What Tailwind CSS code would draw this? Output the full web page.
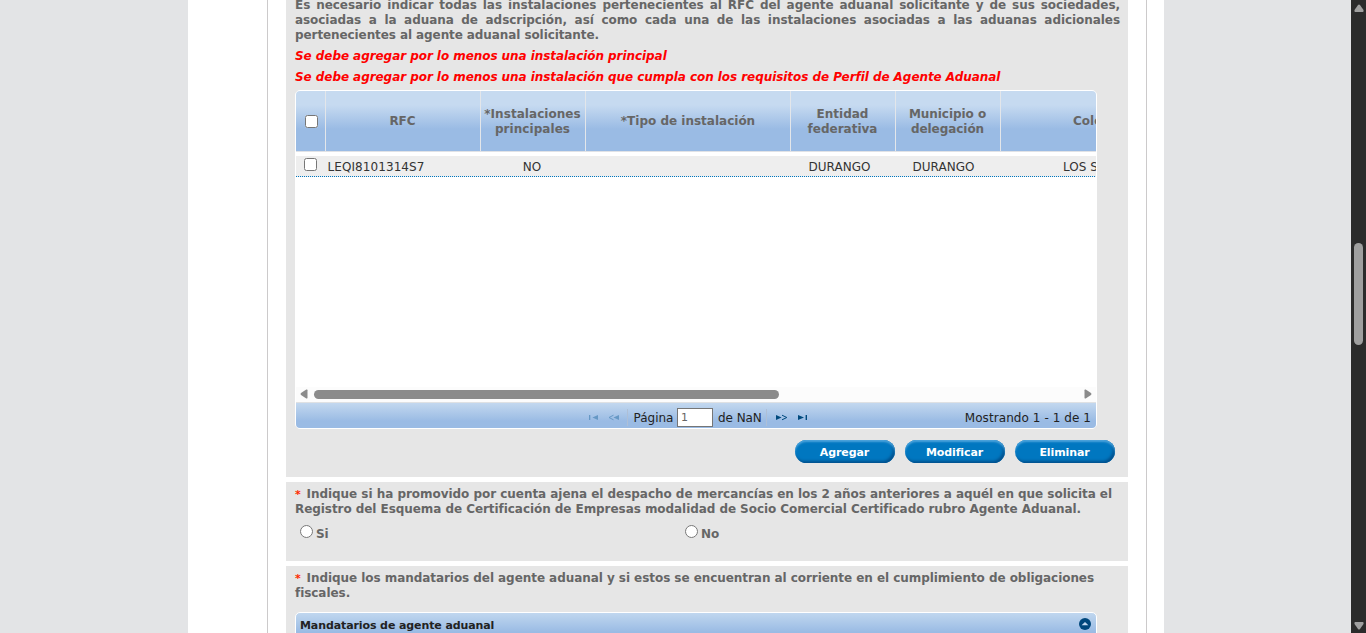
<!DOCTYPE html>
<html lang="es">
<head>
<meta charset="utf-8">
<title>Agente aduanal</title>
<script src="https://cdn.jsdelivr.net/npm/@tailwindcss/browser@4"></script>
</head>
<body class="h-[633px] overflow-hidden bg-[#e3e4e6] font-['DejaVu_Sans',sans-serif] text-[12px] leading-[15px]">
<div class="flex h-[633px] overflow-hidden">
  <div class="w-[188px] shrink-0"></div>
  <main class="w-[976px] shrink-0 bg-white pl-[79px] pr-[17px]">
    <div class="flex h-[633px] flex-col gap-[5px] overflow-hidden border-x border-[#cccacb] px-[18px] text-[#666]">

      <section class="h-[477px] shrink-0 overflow-hidden bg-[#e6e6e6] pl-[9px] pr-[8px]">
        <div class="-mt-[2px] font-bold tracking-[-0.06px]">
          <p class="w-[825px] text-justify [text-align-last:justify]">Es necesario indicar todas las instalaciones pertenecientes al RFC del agente aduanal solicitante y de sus sociedades,</p>
          <p class="w-[825px] text-justify [text-align-last:justify]">asociadas a la aduana de adscripción, así como cada una de las instalaciones asociadas a las aduanas adicionales</p>
          <p class="tracking-[-0.09px]">pertenecientes al agente aduanal solicitante.</p>
          <p class="mt-[6px] italic text-[#ff0000]">Se debe agregar por lo menos una instalación principal</p>
          <p class="mt-[6px] italic text-[#ff0000]">Se debe agregar por lo menos una instalación que cumpla con los requisitos de Perfil de Agente Aduanal</p>
        </div>

        <div class="mt-[5px] h-[339px] w-[802px] overflow-hidden rounded-[5px] border border-white bg-white">
          <div class="flex h-[61px] border-b border-[#e0e2e6] bg-[linear-gradient(to_bottom,#c6daf0_0,#c6daf0_14px,#9abbe4_38px,#9abbe4_100%)] text-center font-bold">
            <div class="flex w-[30px] shrink-0 items-center justify-center border-r border-[#e3e6ea]"><input type="checkbox" class="ml-[2px] size-[13px]"></div>
            <div class="flex w-[155px] shrink-0 items-center justify-center border-r border-[#e3e6ea] pr-px">RFC</div>
            <div class="flex w-[105px] shrink-0 items-center overflow-hidden border-r border-[#e3e6ea] px-[3px] pt-px"><div class="w-[97px] overflow-hidden whitespace-nowrap"><div class="w-[97px] tracking-[0.05px]">*Instalaciones<br>principales</div></div></div>
            <div class="flex w-[205px] shrink-0 items-center justify-center border-r border-[#e3e6ea]">*Tipo de instalación</div>
            <div class="flex w-[105px] shrink-0 items-center justify-center border-r border-[#e3e6ea] pt-px pr-px">Entidad<br>federativa</div>
            <div class="flex w-[105px] shrink-0 items-center justify-center border-r border-[#e3e6ea] pt-px pr-px tracking-[-0.05px]">Municipio o<br>delegación</div>
            <div class="flex w-[200px] shrink-0 items-center pl-[72px]">Colonia</div>
          </div>
          <div class="mt-[4px] flex h-[20px] bg-[#eee] pt-[4px] text-[#333]">
            <div class="w-[29px] shrink-0 pl-[8px]"><input type="checkbox" class="-mt-[2px] block size-[13px]"></div>
            <div class="w-[155px] shrink-0 pl-[2.5px] tracking-[0.08px]">LEQI8101314S7</div>
            <div class="w-[104px] shrink-0 text-center">NO</div>
            <div class="w-[204px] shrink-0"></div>
            <div class="w-[104px] shrink-0 pr-px text-center">DURANGO</div>
            <div class="w-[104px] shrink-0 pr-px text-center">DURANGO</div>
            <div class="w-[204px] shrink-0 pl-[67px]">LOS SAUCES</div>
          </div>
          <div class="h-px bg-[repeating-linear-gradient(to_right,#0077c0_0,#0077c0_1px,#eee_1px,#eee_2px)]"></div>
          <div class="h-[210px]"></div>
          <div class="flex h-[15px] items-center bg-[#fcfcfc] pl-[4px] pr-[4px]">
            <svg class="-mt-px h-[10px] w-[8px]" viewBox="0 0 8 10"><path d="M6.3.6Q7.5 0 7.5 1.2v7.6Q7.5 10 6.3 9.4L1 6Q0 5 1 4Z" fill="#8b8b8b"/></svg>
            <div class="ml-[6px] h-[9px] w-[465px] rounded-full bg-[#8b8b8b]"></div>
            <svg class="-mt-px ml-auto h-[10px] w-[8px]" viewBox="0 0 8 10"><path d="M1.7.6Q.5 0 .5 1.2v7.6Q.5 10 1.7 9.4L7 6Q8 5 7 4Z" fill="#8b8b8b"/></svg>
          </div>
          <div class="flex h-[26px] items-center border-t border-[#dfe1e3] bg-[linear-gradient(to_bottom,#c3d8ef_0,#9abbe4_18px,#9abbe4_100%)] pt-[3px] pr-[5px] text-[#222]">
            <svg class="ml-[293px] h-[7px] w-[32px]" viewBox="0 0 32 7" fill="#6698c5"><path d="M0 1h1.3v5H0ZM9 1v5L3.4 3.5ZM30 1v5L24.4 3.5Z"/><path d="M24.5 1.2 20 3.5 24.5 5.8" fill="none" stroke="#6698c5"/></svg>
            <div class="ml-[6px] h-[17px] w-px bg-[#aebfd6]"></div>
            <span class="ml-[5.5px] pt-[2px]">Página</span>
            <input value="1" class="ml-[3.5px] h-[19px] w-[36px] shrink-0 border border-[#767676] bg-white pt-px pl-[3px] text-[11px] text-[#666]">
            <span class="ml-[5px] pt-[2px] tracking-[-0.05px]">de NaN</span>
            <div class="ml-[4px] h-[17px] w-px bg-[#aebfd6]"></div>
            <svg class="ml-[9px] h-[7px] w-[32px]" viewBox="0 0 32 7" fill="#004a7d"><path d="M0 1v5L5.6 3.5ZM22 1v5L28 3.5ZM29.6 1H31v5h-1.4Z"/><path d="M6 1.2 10.8 3.5 6 5.8" fill="none" stroke="#004a7d"/></svg>
            <span class="ml-auto pt-[2px] tracking-[0.07px]">Mostrando 1 - 1 de 1</span>
          </div>
        </div>

        <div class="mt-[11px] mr-[5px] flex justify-end gap-[10px] text-[11px] font-bold tracking-[-0.1px] text-white">
          <button class="h-[23px] w-[100px] rounded-full bg-[#0077c0] pt-[1px] pr-px shadow-[inset_0_2px_2px_#4ba3dc,inset_-2px_-2px_3px_#00508c]">Agregar</button>
          <button class="h-[23px] w-[100px] rounded-full bg-[#0077c0] pt-[1px] pr-px shadow-[inset_0_2px_2px_#4ba3dc,inset_-2px_-2px_3px_#00508c]">Modificar</button>
          <button class="h-[23px] w-[100px] rounded-full bg-[#0077c0] pt-[1px] pr-px shadow-[inset_0_2px_2px_#4ba3dc,inset_-2px_-2px_3px_#00508c]">Eliminar</button>
        </div>
      </section>

      <section class="h-[79px] shrink-0 bg-[#e6e6e6] pt-[5px] pl-[9px] font-bold tracking-[-0.06px]">
        <p class="whitespace-nowrap"><span class="tracking-[-0.038px]"><span class="mr-[5px] inline-block w-[6.5px] text-[11px] text-[#ff2a00]">*</span>Indique si ha promovido por cuenta ajena el despacho de mercancías en los 2 años anteriores a aquél en que solicita el</span><br>Registro del Esquema de Certificación de Empresas modalidad de Socio Comercial Certificado rubro Agente Aduanal.</p>
        <div class="mt-[8px] flex pl-[5px]">
          <label class="flex w-[385px] items-start gap-[3px]"><input type="radio" name="r" class="size-[13px]"><span class="mt-[2px]">Si</span></label>
          <label class="flex items-start gap-[3px]"><input type="radio" name="r" class="size-[13px]"><span class="mt-[2px]">No</span></label>
        </div>
      </section>

      <section class="h-[90px] shrink-0 bg-[#e6e6e6] pt-[5px] pl-[9px] font-bold tracking-[-0.055px]">
        <p class="whitespace-nowrap"><span class="mr-[5px] inline-block w-[6.5px] text-[11px] text-[#ff2a00]">*</span>Indique los mandatarios del agente aduanal y si estos se encuentran al corriente en el cumplimiento de obligaciones<br>fiscales.</p>
        <div class="mt-[11px] flex h-[30px] w-[802px] items-start justify-between rounded-t-[5px] border border-white bg-[linear-gradient(to_bottom,#c0d7ef_0,#9abbe4_19px)] pt-[5px] pr-[5px] pl-[4px] text-[11px] tracking-[-0.1px] text-[#222]">
          <span>Mandatarios de agente aduanal</span>
          <svg class="size-[12px]" viewBox="0 0 12 12"><circle cx="6" cy="6" r="6" fill="#00477c"/><path d="M2.6 7.2 6 4.1l3.4 3.1Z" fill="#c0d7ef"/></svg>
        </div>
      </section>
    </div>
  </main>
  <div class="grow"></div>
  <div class="flex w-[15px] shrink-0 flex-col items-center bg-[#2b2b2b]">
    <svg class="mt-[4px] h-[8px] w-[10px]" viewBox="0 0 10 8"><path d="M4 1Q5 0 6 1l3.5 5Q10 8 8.8 8H1.2Q0 8 .5 6Z" fill="#9f9f9f"/></svg>
    <div class="mt-[231px] h-[102px] w-[9px] rounded-full bg-[#9f9f9f]"></div>
    <svg class="mt-[277px] h-[8px] w-[10px]" viewBox="0 0 10 8"><path d="M4 7Q5 8 6 7l3.5-5Q10 0 8.8 0H1.2Q0 0 .5 2Z" fill="#9f9f9f"/></svg>
  </div>
</div>
</body>
</html>
